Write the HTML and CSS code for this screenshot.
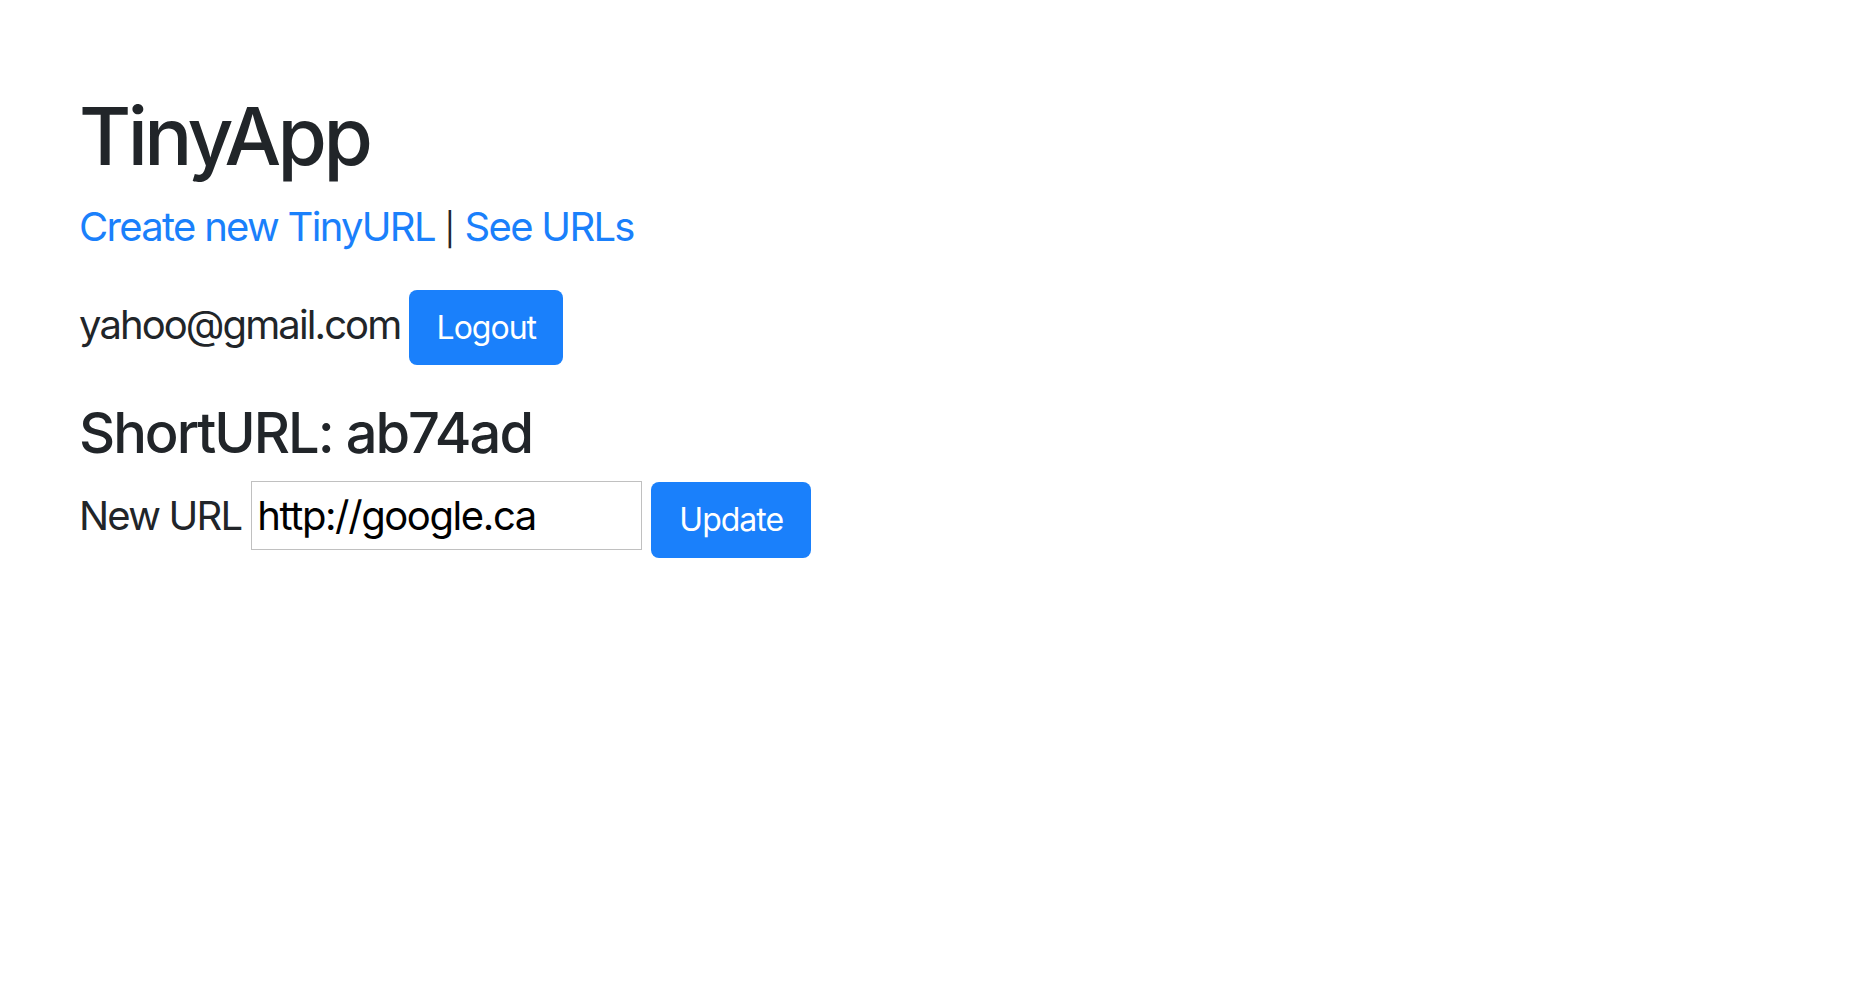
FILE: index.html
```html
<!DOCTYPE html>
<html lang="en">
<head>
<meta charset="utf-8">
<title>TinyApp</title>
<link rel="stylesheet" href="styles.css">
</head>
<body>
<main class="page">
  <h1 class="title">TinyApp</h1>
  <nav class="links"><a href="#" class="link">Create new TinyURL</a> <span class="sep">|</span> <a href="#" class="link">See URLs</a></nav>
  <div class="user-row">
    <span class="email">yahoo@gmail.com</span>
    <button type="button" class="btn btn-logout">Logout</button>
  </div>
  <h2 class="short">ShortURL: ab74ad</h2>
  <form class="edit-row" onsubmit="return false">
    <label class="edit-label" for="longURL">New URL</label>
    <input class="url-input" id="longURL" type="text" value="http://google.ca">
    <button type="submit" class="btn btn-update">Update</button>
  </form>
</main>
</body>
</html>
```

FILE: styles.css
```css
html, body {
  margin: 0;
  padding: 0;
  background: #ffffff;
}

body {
  font-family: Inter, "Liberation Sans", sans-serif;
  color: #212529;
}

.page {
  padding: 88px 0 0 79px;
}

.title {
  margin: 0 0 13px 0;
  font-size: 80px;
  font-weight: 500;
  line-height: 96px;
  letter-spacing: -3.6px;
}

.links {
  font-size: 40px;
  line-height: 60px;
  letter-spacing: -1.7px;
  margin: 0 0 33px 0;
}

.link {
  color: #1a80fb;
  text-decoration: none;
}

.sep {
  font-size: 32px;
  line-height: 1;
  letter-spacing: 0;
}

.user-row {
  display: flex;
  align-items: baseline;
  gap: 9px;
  margin: 0 0 35px 0;
}

.email {
  font-size: 40px;
  line-height: 60px;
  letter-spacing: -1.9px;
}

.btn {
  font-family: Inter, "Liberation Sans", sans-serif;
  font-size: 32px;
  line-height: 48px;
  color: #ffffff;
  background: #1a80fb;
  border: 0;
  border-radius: 8px;
  cursor: pointer;
  letter-spacing: -1px;
}

.btn-logout {
  padding: 13.5px 0;
  width: 154px;
}

.short {
  margin: 0 0 14px 0;
  font-size: 56px;
  font-weight: 500;
  line-height: 67px;
  letter-spacing: -2px;
}

.edit-row {
  display: flex;
  align-items: flex-start;
  margin: 0;
}

.edit-label {
  font-size: 40px;
  line-height: 60px;
  padding-top: 5px;
  letter-spacing: -1.8px;
  margin-right: 10px;
}

.url-input {
  box-sizing: border-box;
  width: 391px;
  height: 69px;
  margin: 0 9px 0 0;
  padding: 0 5px;
  border: 1px solid #c0c0c0;
  border-radius: 0;
  font-family: Inter, "Liberation Sans", sans-serif;
  font-size: 40px;
  color: #000000;
  letter-spacing: -1.4px;
  outline: none;
}

.btn-update {
  margin-top: 1px;
  padding: 14px 0;
  width: 160px;
}
```
